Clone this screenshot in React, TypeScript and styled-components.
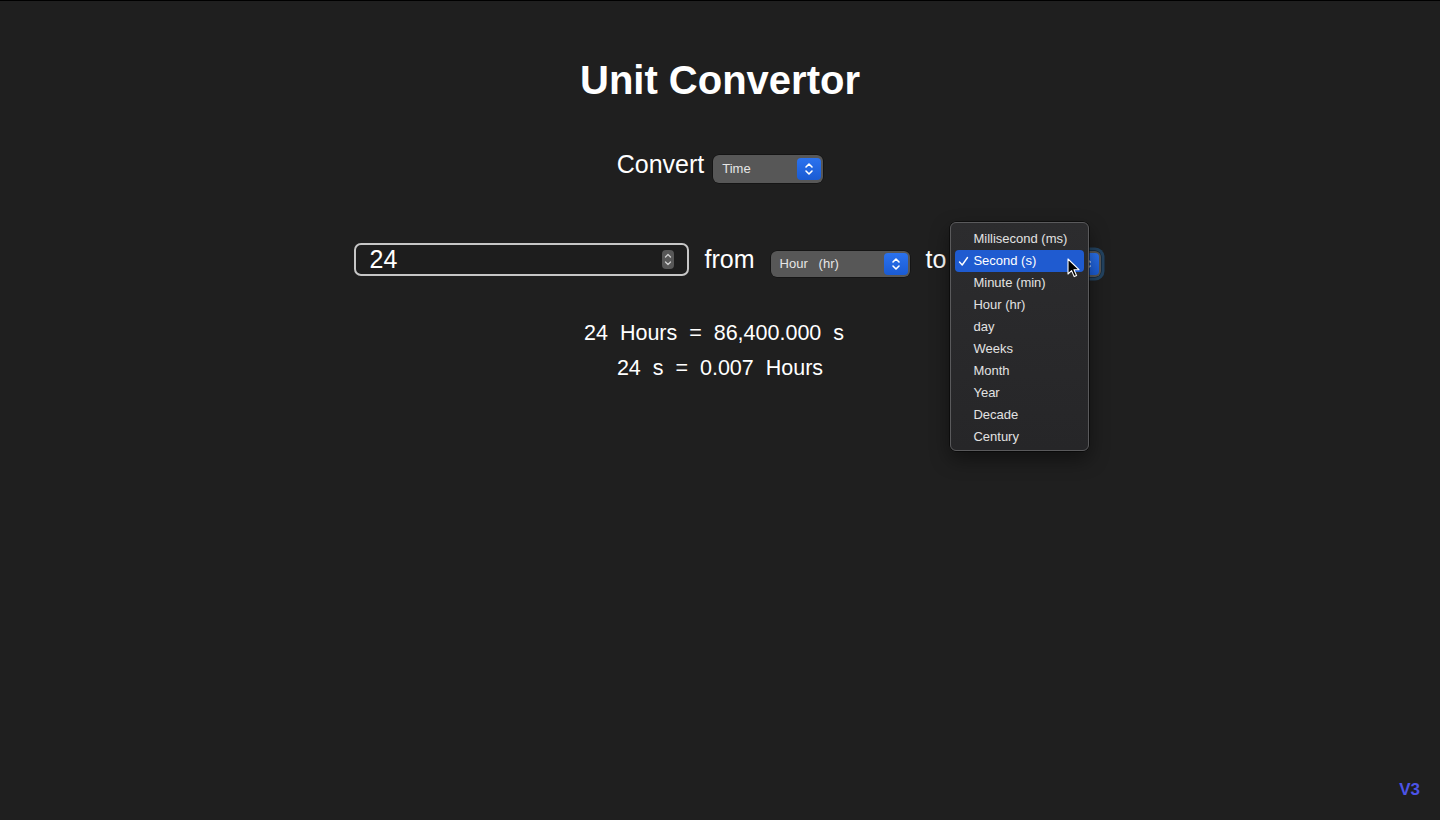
import React from "react";
import styled, { createGlobalStyle } from "styled-components";

const GlobalStyle = createGlobalStyle`
  body {
    margin: 0;
    background: #1f1f1f;
    color: #ffffff;
    font-family: "Liberation Sans", Arial, sans-serif;
  }
`;

const timeUnits = [
  "Millisecond (ms)",
  "Second (s)",
  "Minute (min)",
  "Hour (hr)",
  "day",
  "Weeks",
  "Month",
  "Year",
  "Decade",
  "Century",
];

const Chevrons: React.FC<{ color?: string; small?: boolean }> = ({ color = "#ffffff", small }) =>
  small ? (
    <svg width="12" height="19" viewBox="0 0 12 19">
      <polyline points="3.5,7 6,4.5 8.5,7" fill="none" stroke={color} strokeWidth="1.3" strokeLinecap="round" strokeLinejoin="round" />
      <polyline points="3.5,12 6,14.5 8.5,12" fill="none" stroke={color} strokeWidth="1.3" strokeLinecap="round" strokeLinejoin="round" />
    </svg>
  ) : (
    <svg width="24" height="24" viewBox="0 0 24 24">
      <polyline points="9,10 12,7 15,10" fill="none" stroke={color} strokeWidth="1.6" strokeLinecap="round" strokeLinejoin="round" />
      <polyline points="9,14 12,17 15,14" fill="none" stroke={color} strokeWidth="1.6" strokeLinecap="round" strokeLinejoin="round" />
    </svg>
  );

const Pointer = () => (
  <svg width="14" height="21" viewBox="0 0 14 21">
    <path
      d="M1 1 L1 16 L4.6 12.6 L7.2 18.6 L9.6 17.6 L7 11.7 L12 11.7 Z"
      fill="#000000"
      stroke="#ffffff"
      strokeWidth="1.1"
      strokeLinejoin="round"
    />
  </svg>
);

const Check = () => (
  <svg width="11" height="11" viewBox="0 0 11 11">
    <polyline points="1.5,6 4.2,9 9.5,1.5" fill="none" stroke="#ffffff" strokeWidth="1.4" strokeLinecap="round" strokeLinejoin="round" />
  </svg>
);

export default function App() {
  return (
    <>
      <GlobalStyle />
      <Styled.Page>
        <Styled.Title>Unit Convertor</Styled.Title>

        <Styled.ConvertRow>
          <Styled.Label>Convert</Styled.Label>
          <Styled.Select $width={110} $height={28}>
            <Styled.SelectText>Time</Styled.SelectText>
            <Styled.Stepper>
              <Chevrons />
            </Styled.Stepper>
          </Styled.Select>
        </Styled.ConvertRow>

        <Styled.InputRow>
          <Styled.NumberField>
            <Styled.NumberValue>24</Styled.NumberValue>
            <Styled.Spinner>
              <Chevrons small color="#cfcfcf" />
            </Styled.Spinner>
          </Styled.NumberField>
          <Styled.Label>from</Styled.Label>
          <Styled.Select $width={139} $height={26}>
            <Styled.SelectText>{"Hour   (hr)"}</Styled.SelectText>
            <Styled.Stepper>
              <Chevrons />
            </Styled.Stepper>
          </Styled.Select>
          <Styled.Label>to</Styled.Label>
          <Styled.MenuAnchor>
            <Styled.Select $width={139} $height={26} $focused>
              <Styled.SelectText $hidden>Second (s)</Styled.SelectText>
              <Styled.Stepper>
                <Chevrons />
              </Styled.Stepper>
            </Styled.Select>
            <Styled.Menu>
              {timeUnits.map((unit) => (
                <Styled.MenuItem key={unit} $active={unit === "Second (s)"}>
                  <Styled.CheckSlot>{unit === "Second (s)" && <Check />}</Styled.CheckSlot>
                  {unit}
                </Styled.MenuItem>
              ))}
              <Styled.Cursor>
                <Pointer />
              </Styled.Cursor>
            </Styled.Menu>
          </Styled.MenuAnchor>
        </Styled.InputRow>

        <Styled.Results>
          <div>{"24  Hours  =  86,400.000  s  "}</div>
          <div>{"24  s  =  0.007  Hours"}</div>
        </Styled.Results>

        <Styled.Version>V3</Styled.Version>
      </Styled.Page>
    </>
  );
}

const Styled = {
  Page: styled.div`
    box-sizing: border-box;
    height: 820px;
    border-top: 1px solid #000000;
    padding-top: 55px;
    display: flex;
    flex-direction: column;
    align-items: center;
    overflow: hidden;
  `,
  Title: styled.h1`
    margin: 0;
    font-size: 40px;
    line-height: 48px;
    font-weight: 700;
  `,
  ConvertRow: styled.div`
    margin-top: 45px;
    display: flex;
    align-items: baseline;
    gap: 9px;
  `,
  Label: styled.span`
    font-size: 25px;
    line-height: 30px;
    color: #ffffff;
  `,
  Select: styled.div<{ $width: number; $height: number; $focused?: boolean }>`
    box-sizing: border-box;
    width: ${(p) => p.$width}px;
    height: ${(p) => p.$height}px;
    display: flex;
    align-items: center;
    padding: 0 2px 0 9px;
    background: #575757;
    border-radius: 6px;
    box-shadow: 0 0 0 0.5px rgba(0, 0, 0, 0.6)
      ${(p) => (p.$focused ? ", 0 0 0 3.5px rgba(38, 96, 150, 0.55)" : "")};
  `,
  SelectText: styled.span<{ $hidden?: boolean }>`
    flex: 1;
    font-size: 13px;
    line-height: 18px;
    color: #e6e6e6;
    white-space: pre;
    visibility: ${(p) => (p.$hidden ? "hidden" : "visible")};
  `,
  Stepper: styled.span`
    width: 24px;
    height: 22px;
    display: flex;
    align-items: center;
    justify-content: center;
    border-radius: 4px;
    background: linear-gradient(#2b72ee, #1a5bd3);
    svg {
      display: block;
    }
  `,
  InputRow: styled.div`
    margin-top: 60px;
    padding-left: 15px;
    display: flex;
    align-items: baseline;
    gap: 16px;
  `,
  NumberField: styled.div`
    box-sizing: border-box;
    width: 335px;
    height: 33px;
    display: flex;
    align-items: center;
    justify-content: space-between;
    padding: 0 13px 0 14px;
    border: 2px solid #c6c6c6;
    border-radius: 7px;
    background: #1d1d1d;
  `,
  NumberValue: styled.span`
    font-size: 25px;
    line-height: 29px;
  `,
  Spinner: styled.span`
    width: 12px;
    height: 19px;
    border-radius: 4px;
    background: #575757;
    svg {
      display: block;
    }
  `,
  MenuAnchor: styled.div`
    position: relative;
  `,
  Menu: styled.div`
    position: absolute;
    left: -12px;
    top: -29px;
    box-sizing: border-box;
    width: 139px;
    padding: 5px 4px 2px;
    background: linear-gradient(#2c2c2e, #262628);
    border: 1px solid #5a5a5c;
    border-radius: 6px;
    box-shadow: 0 0 0 0.5px #000000, 0 8px 20px rgba(0, 0, 0, 0.45);
    z-index: 10;
  `,
  MenuItem: styled.div<{ $active?: boolean }>`
    display: flex;
    align-items: center;
    height: 22px;
    font-size: 13px;
    line-height: 22px;
    border-radius: 4px;
    color: ${(p) => (p.$active ? "#ffffff" : "#e2e2e2")};
    background: ${(p) => (p.$active ? "#1f5bd0" : "transparent")};
    white-space: nowrap;
  `,
  CheckSlot: styled.span`
    width: 18px;
    flex: none;
    display: flex;
    padding-left: 3px;
    box-sizing: border-box;
    svg {
      display: block;
    }
  `,
  Cursor: styled.span`
    position: absolute;
    left: 116px;
    top: 35px;
    line-height: 0;
  `,
  Results: styled.div`
    margin-top: 39px;
    font-size: 21.5px;
    line-height: 35px;
    text-align: center;
    white-space: pre;
  `,
  Version: styled.div`
    margin-top: auto;
    align-self: flex-end;
    padding: 0 20px 20px 0;
    font-size: 17px;
    line-height: 20px;
    font-weight: 700;
    color: #4c54e8;
  `,
};
